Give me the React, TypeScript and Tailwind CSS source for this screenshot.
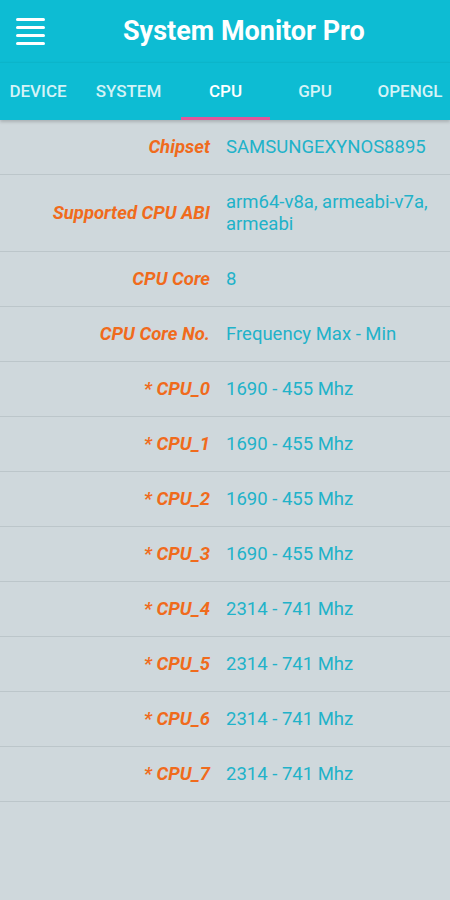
import { useState } from "react";

const tabs = [
  { name: "DEVICE", w: "w-[76px]" },
  { name: "SYSTEM", w: "w-[105px]" },
  { name: "CPU", w: "w-[89px]" },
  { name: "GPU", w: "w-[90px]" },
  { name: "OPENGL", w: "w-[100px]" },
];

const rows: { label: string; value: string }[] = [
  { label: "Chipset", value: "SAMSUNGEXYNOS8895" },
  { label: "Supported CPU ABI", value: "arm64-v8a, armeabi-v7a, armeabi" },
  { label: "CPU Core", value: "8" },
  { label: "CPU Core No.", value: "Frequency Max - Min" },
  { label: "* CPU_0", value: "1690 - 455 Mhz" },
  { label: "* CPU_1", value: "1690 - 455 Mhz" },
  { label: "* CPU_2", value: "1690 - 455 Mhz" },
  { label: "* CPU_3", value: "1690 - 455 Mhz" },
  { label: "* CPU_4", value: "2314 - 741 Mhz" },
  { label: "* CPU_5", value: "2314 - 741 Mhz" },
  { label: "* CPU_6", value: "2314 - 741 Mhz" },
  { label: "* CPU_7", value: "2314 - 741 Mhz" },
];

export default function App() {
  const [active, setActive] = useState("CPU");

  return (
    <div className="w-[450px] h-[900px] overflow-hidden flex flex-col bg-[#cfd8dc] font-['Roboto','Liberation_Sans',sans-serif]">
      {/* Toolbar */}
      <div className="h-[62px] bg-[#0dbcd3] flex items-center shrink-0">
        <button className="ml-[16px] w-[29px] flex flex-col gap-[5px]">
          <span className="h-[3px] bg-white rounded-sm" />
          <span className="h-[3px] bg-white rounded-sm" />
          <span className="h-[3px] bg-white rounded-sm" />
          <span className="h-[3px] bg-white rounded-sm" />
        </button>
        <h1 className="ml-[78px] text-white text-[27px] font-bold">System Monitor Pro</h1>
      </div>

      {/* Tabs */}
      <div className="relative h-[58px] bg-[#0dbcd3] flex shrink-0 overflow-hidden shadow-[0_2px_3px_rgba(0,0,0,0.18)] z-10 border-t border-[#0aa9be]/40">
        {tabs.map((t) => (
          <button
            key={t.name}
            onClick={() => setActive(t.name)}
            className={`${t.w} shrink-0 relative flex items-center justify-center text-[17px] font-medium ${
              active === t.name ? "text-white" : "text-[#d4f3f7]"
            }`}
          >
            {t.name}
            {active === t.name && (
              <span className="absolute left-0 right-0 bottom-0 h-[3px] bg-[#e2579a]" />
            )}
          </button>
        ))}
      </div>

      {/* Details */}
      <div className="flex flex-col">
        {rows.map((r) => (
          <div key={r.label} className="flex items-center py-[16px] border-b border-[#bcc6ca]">
            <div className="w-[210px] shrink-0 text-right text-[18.5px] leading-[22px] font-bold italic text-[#f06b1c]">
              {r.label}
            </div>
            <div className="ml-[16px] w-[215px] text-[18.5px] leading-[22px] text-[#21b2c9]">
              {r.value}
            </div>
          </div>
        ))}
      </div>
    </div>
  );
}
